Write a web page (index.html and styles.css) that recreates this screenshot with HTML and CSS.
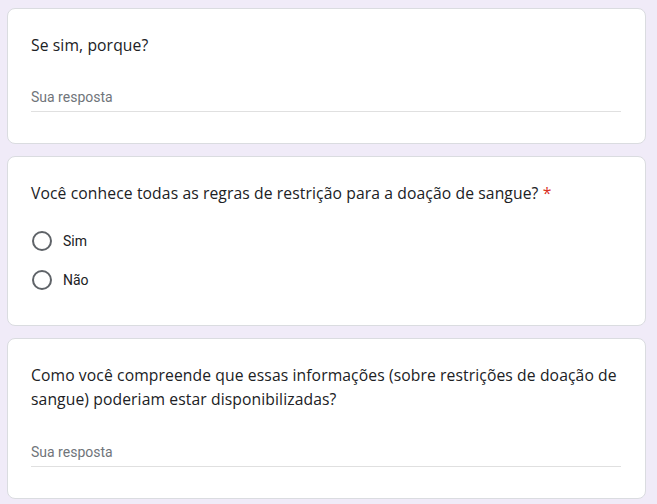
FILE: index.html
```html
<!DOCTYPE html>
<html lang="pt">
<head>
<meta charset="utf-8">
<link rel="stylesheet" href="styles.css">
</head>
<body>
<main class="form">
  <section class="card">
    <div class="question">Se sim, porque?</div>
    <div class="answer"><span class="placeholder">Sua resposta</span></div>
  </section>
  <section class="card card-radio">
    <div class="question">Você conhece todas as regras de restrição para a doação de sangue? <span class="req">*</span></div>
    <div class="options">
      <label class="option"><span class="radio"></span><span class="opt-label">Sim</span></label>
      <label class="option"><span class="radio"></span><span class="opt-label">Não</span></label>
    </div>
  </section>
  <section class="card card-long">
    <div class="question">Como você compreende que essas informações (sobre restrições de doação de sangue) poderiam estar disponibilizadas?</div>
    <div class="answer"><span class="placeholder">Sua resposta</span></div>
  </section>
</main>
</body>
</html>
```
FILE: styles.css
```css
* { box-sizing: border-box; }
html, body { margin: 0; padding: 0; }
body {
  background: #f0ebf8;
  font-family: Roboto, "Liberation Sans", sans-serif;
  color: #202124;
}
.form {
  display: flex;
  flex-direction: column;
  gap: 12px;
  padding: 8px 12px 8px 7px;
  width: 657px;
}
.card {
  background: #fff;
  border: 1px solid #dadce0;
  border-radius: 8px;
  padding: 24px 24px 31px 23px;
  width: 639px;
}
.question {
  font-family: "Open Sans", Roboto, sans-serif;
  font-size: 15.7px;
  line-height: 24px;
  color: #202124;
  letter-spacing: 0.1px;
}
.req { color: #d93025; }
.answer {
  margin-top: 30px;
  width: 590px;
  border-bottom: 1px solid #e0e0e0;
  padding-bottom: 4px;
}
.card-long .answer { margin-top: 31px; }
.placeholder {
  font-size: 14px;
  line-height: 20px;
  color: #70757a;
}
.card-radio { padding-bottom: 33px; }
.options {
  display: flex;
  flex-direction: column;
  gap: 15px;
  margin-top: 24px;
}
.option {
  display: flex;
  align-items: center;
  height: 24px;
}
.radio {
  width: 20px;
  height: 20px;
  border: 2px solid #5f6368;
  border-radius: 50%;
  margin-left: 1px;
}
.opt-label {
  margin-left: 11px;
  font-size: 14px;
  color: #202124;
}
```
